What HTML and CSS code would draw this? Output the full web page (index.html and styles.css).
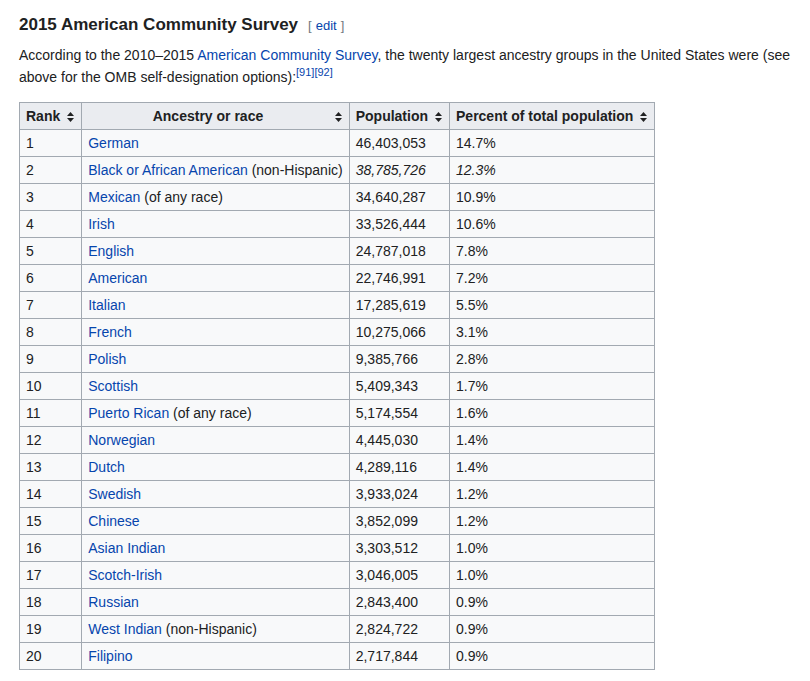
FILE: index.html
```
<!DOCTYPE html>
<html>
<head>
<meta charset="utf-8">
<link rel="stylesheet" href="styles.css">
</head>
<body>
<div class="content">
  <h2 class="heading"><span class="title">2015 American Community Survey</span><span class="editsection"><span class="bracket">[</span><a href="#">edit</a><span class="bracket">]</span></span></h2>
  <p class="intro">According to the 2010–2015 <a href="#">American Community Survey</a>, the twenty largest ancestry groups in the United States were (see above for the OMB self-designation options):<sup class="ref"><a href="#">[91]</a><a href="#">[92]</a></sup></p>
  <table class="wikitable">
    <thead>
      <tr>
        <th class="c-rank sortable">Rank<svg class="sort" width="7" height="10" viewBox="0 0 7 10"><path d="M3.5 0 L7 4 L0 4 Z M3.5 10 L7 6 L0 6 Z" fill="#202122"/></svg></th>
        <th class="c-anc sortable center">Ancestry or race<svg class="sort" width="7" height="10" viewBox="0 0 7 10"><path d="M3.5 0 L7 4 L0 4 Z M3.5 10 L7 6 L0 6 Z" fill="#202122"/></svg></th>
        <th class="c-pop sortable">Population<svg class="sort" width="7" height="10" viewBox="0 0 7 10"><path d="M3.5 0 L7 4 L0 4 Z M3.5 10 L7 6 L0 6 Z" fill="#202122"/></svg></th>
        <th class="c-pct sortable">Percent of total population<svg class="sort" width="7" height="10" viewBox="0 0 7 10"><path d="M3.5 0 L7 4 L0 4 Z M3.5 10 L7 6 L0 6 Z" fill="#202122"/></svg></th>
      </tr>
    </thead>
    <tbody>
      <tr><td>1</td><td><a href="#">German</a></td><td>46,403,053</td><td>14.7%</td></tr>
      <tr><td>2</td><td><a href="#">Black or African American</a> (non-Hispanic)</td><td><i>38,785,726</i></td><td><i>12.3%</i></td></tr>
      <tr><td>3</td><td><a href="#">Mexican</a> (of any race)</td><td>34,640,287</td><td>10.9%</td></tr>
      <tr><td>4</td><td><a href="#">Irish</a></td><td>33,526,444</td><td>10.6%</td></tr>
      <tr><td>5</td><td><a href="#">English</a></td><td>24,787,018</td><td>7.8%</td></tr>
      <tr><td>6</td><td><a href="#">American</a></td><td>22,746,991</td><td>7.2%</td></tr>
      <tr><td>7</td><td><a href="#">Italian</a></td><td>17,285,619</td><td>5.5%</td></tr>
      <tr><td>8</td><td><a href="#">French</a></td><td>10,275,066</td><td>3.1%</td></tr>
      <tr><td>9</td><td><a href="#">Polish</a></td><td>9,385,766</td><td>2.8%</td></tr>
      <tr><td>10</td><td><a href="#">Scottish</a></td><td>5,409,343</td><td>1.7%</td></tr>
      <tr><td>11</td><td><a href="#">Puerto Rican</a> (of any race)</td><td>5,174,554</td><td>1.6%</td></tr>
      <tr><td>12</td><td><a href="#">Norwegian</a></td><td>4,445,030</td><td>1.4%</td></tr>
      <tr><td>13</td><td><a href="#">Dutch</a></td><td>4,289,116</td><td>1.4%</td></tr>
      <tr><td>14</td><td><a href="#">Swedish</a></td><td>3,933,024</td><td>1.2%</td></tr>
      <tr><td>15</td><td><a href="#">Chinese</a></td><td>3,852,099</td><td>1.2%</td></tr>
      <tr><td>16</td><td><a href="#">Asian Indian</a></td><td>3,303,512</td><td>1.0%</td></tr>
      <tr><td>17</td><td><a href="#">Scotch-Irish</a></td><td>3,046,005</td><td>1.0%</td></tr>
      <tr><td>18</td><td><a href="#">Russian</a></td><td>2,843,400</td><td>0.9%</td></tr>
      <tr><td>19</td><td><a href="#">West Indian</a> (non-Hispanic)</td><td>2,824,722</td><td>0.9%</td></tr>
      <tr><td>20</td><td><a href="#">Filipino</a></td><td>2,717,844</td><td>0.9%</td></tr>
    </tbody>
  </table>
</div>
</body>
</html>
```

FILE: styles.css
```
html, body {
  margin: 0;
  padding: 0;
  background: #ffffff;
}
body {
  font-family: "Liberation Sans", Arial, sans-serif;
  color: #202122;
  font-size: 14px;
}
a {
  color: #0645ad;
  text-decoration: none;
}
.content {
  padding: 14px 19px 0 19px;
  width: 772px;
}
.heading {
  margin: 0;
  font-size: 17px;
  line-height: 22px;
  font-weight: bold;
  display: flex;
  align-items: baseline;
}
.editsection {
  font-size: 13px;
  font-weight: normal;
  margin-left: 10px;
  display: inline-flex;
  gap: 4px;
}
.bracket {
  color: #72777d;
}
.intro {
  margin: 7px 0 0 0;
  line-height: 22px;
}
.ref {
  font-size: 11px;
  line-height: 1;
  vertical-align: 6px;
}
.wikitable {
  margin-top: 14px;
  border-collapse: collapse;
  background: #f8f9fa;
  border: 1px solid #a2a9b1;
  font-size: 14px;
}
.wikitable th,
.wikitable td {
  border: 1px solid #a2a9b1;
  padding: 3px 6px;
  line-height: 20px;
  text-align: left;
  white-space: nowrap;
}
.wikitable th {
  background: #eaecf0;
  font-weight: bold;
  position: relative;
  padding-right: 21px;
}
.wikitable th.center {
  text-align: center;
}
.sort {
  position: absolute;
  right: 7px;
  top: 9px;
}
.c-rank { width: 33px; }
.c-anc { width: 238px; }
.c-pop { width: 72px; }
.c-pct { width: 177px; }
```
